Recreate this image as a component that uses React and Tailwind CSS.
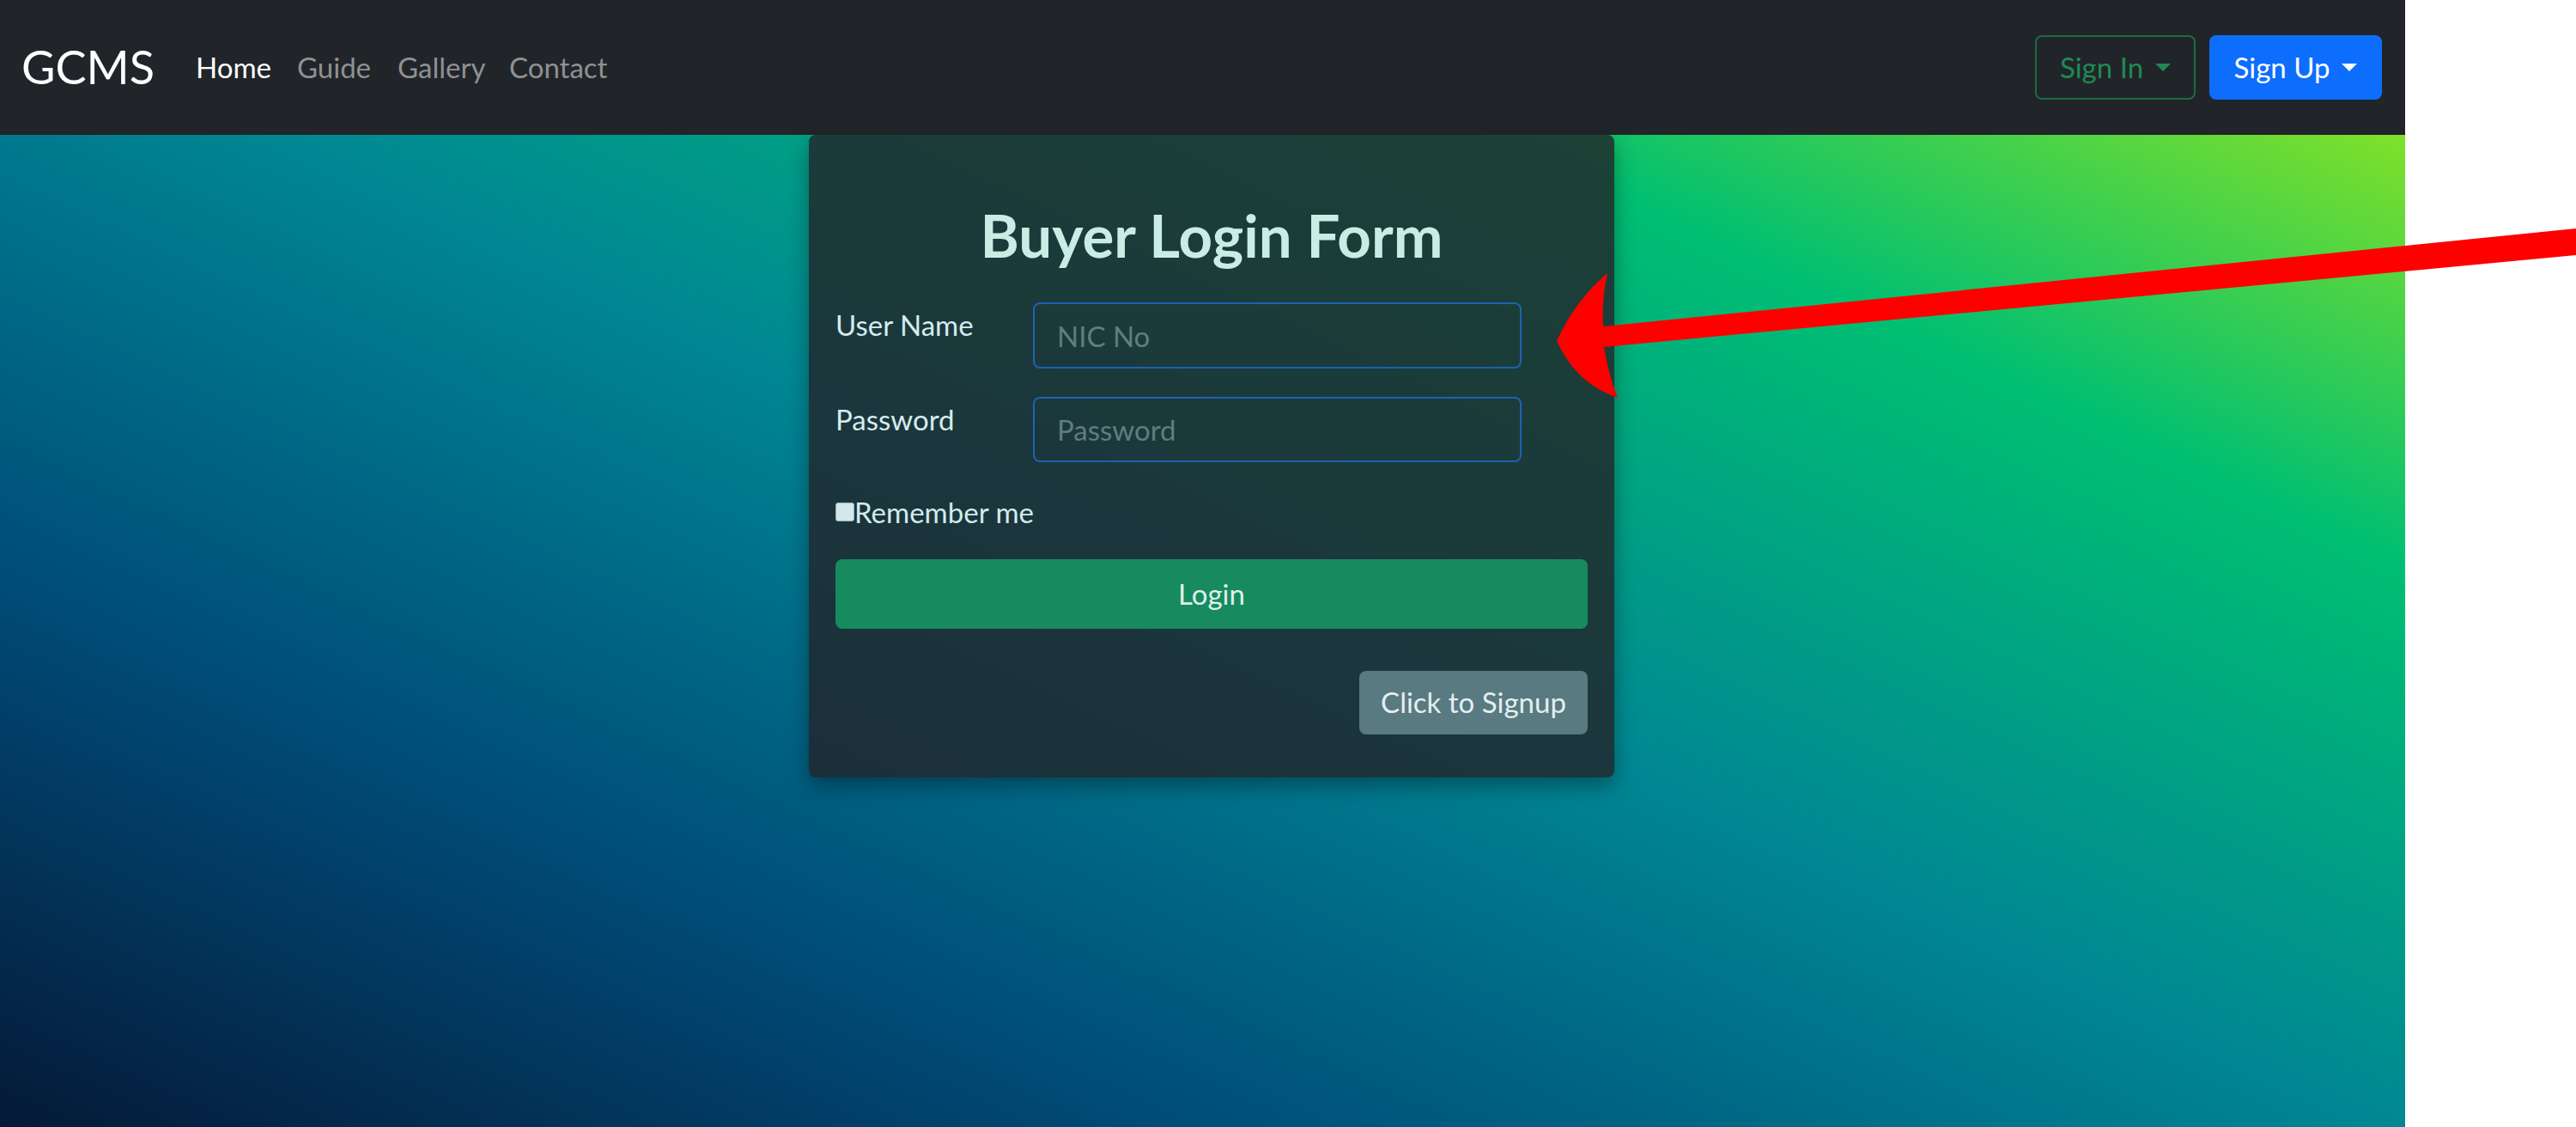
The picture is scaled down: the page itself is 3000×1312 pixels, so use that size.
import React from "react";

function Caret({ color }) {
  return (
    <span
      className={`ml-[14px] inline-block w-0 h-0 border-l-[9px] border-r-[9px] border-t-[9px] border-l-transparent border-r-transparent ${color}`}
    />
  );
}

export default function App() {
  return (
    <div className="relative flex w-[3000px] h-[1312px] bg-white overflow-hidden font-[Lato,'Noto_Sans',sans-serif]">
      <div className="w-[2801px] h-[1312px] flex flex-col bg-[linear-gradient(to_right_top,#051937,#004d7a,#008793,#00bf72,#a8eb12)]">
        {/* Navbar */}
        <nav className="h-[157px] shrink-0 bg-[#212529] flex items-center pl-[25px] pr-[27px]">
          <div className="w-[203px] text-[54px] leading-none text-white pb-[2px]">GCMS</div>
          <div className="flex items-center text-[33px] leading-[49px]">
            <a className="w-[118px] text-white">Home</a>
            <a className="w-[117px] text-[#8f9193]">Guide</a>
            <a className="w-[130px] text-[#8f9193]">Gallery</a>
            <a className="text-[#8f9193]">Contact</a>
          </div>
          <div className="ml-auto flex items-center gap-[16px]">
            <button className="w-[187px] h-[75px] flex items-center justify-center rounded-[8px] border-2 border-[#1c6b46] text-[#1e8a52] text-[33px]">
              Sign In
              <Caret color="border-t-[#1e8a52]" />
            </button>
            <button className="w-[201px] h-[75px] flex items-center justify-center rounded-[8px] bg-[#0d6efd] text-white text-[33px]">
              Sign Up
              <Caret color="border-t-white" />
            </button>
          </div>
        </nav>

        {/* Content */}
        <div className="flex justify-center pl-[21px]">
          <div className="w-[938px] rounded-[8px] bg-[#212529]/[0.82] shadow-[0_10px_24px_rgba(0,0,0,0.35)] px-[31px] pt-[78px] pb-[50px] flex flex-col">
            <h1 className="h-[77px] text-center text-[69px] leading-[77px] font-bold text-[#c9ede4]">
              Buyer Login Form
            </h1>

            <div className="mt-[40px] flex items-start">
              <label className="w-[230px] pt-[2px] text-[33px] leading-[49px] text-[#d5ecee]">User Name</label>
              <input
                type="text"
                placeholder="NIC No"
                className="w-[569px] h-[77px] rounded-[8px] border-2 border-[#1d62b3] bg-transparent pl-[26px] text-[33px] text-[#d5ecee] placeholder:text-[#5f7e7d] outline-none"
              />
            </div>

            <div className="mt-[33px] flex items-start">
              <label className="w-[230px] pt-[2px] text-[33px] leading-[49px] text-[#d5ecee]">Password</label>
              <input
                type="password"
                placeholder="Password"
                className="w-[569px] h-[76px] rounded-[8px] border-2 border-[#1d62b3] bg-transparent pl-[26px] text-[33px] text-[#d5ecee] placeholder:text-[#5f7e7d] outline-none"
              />
            </div>

            <div className="mt-[43px] h-[30px] flex items-center">
              <input
                type="checkbox"
                className="appearance-none w-[22px] h-[22px] rounded-[3px] border border-[#9db4b7] bg-[#d3e6ea]"
              />
              <span className="text-[33px] leading-[30px] text-[#d3ebec]">Remember me</span>
            </div>

            <button className="mt-[40px] h-[81px] w-full rounded-[8px] bg-[#178a60] text-[33px] text-[#dff0ea]">
              Login
            </button>

            <div className="mt-[49px] flex justify-end">
              <button className="w-[266px] h-[74px] rounded-[8px] bg-[#587a80] text-[33px] text-[#e4eef0]">
                Click to Signup
              </button>
            </div>
          </div>
        </div>
      </div>

      {/* Red annotation arrow */}
      <svg
        className="absolute left-0 top-0 pointer-events-none"
        width="3000"
        height="1312"
        viewBox="0 0 3000 1312"
      >
        <path
          d="M1813 397 Q1834 350 1872 318 Q1865 350 1867 380 L3000 266 L3000 297 L1868 404 Q1873 436 1884 463 Q1836 447 1813 397 Z"
          fill="#ff0000"
        />
      </svg>
    </div>
  );
}
